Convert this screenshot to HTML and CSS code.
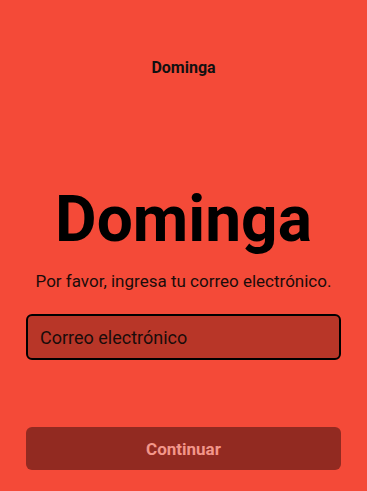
FILE: index.html
```html
<!DOCTYPE html>
<html>
  <head>
    <link rel="stylesheet" href="styles.css">
    <title>Dominga</title>
  </head>
  <body>
    <p class="top-title">Dominga</p>
    <div class="login-box">
      <h1 class="brand">Dominga</h1>
      <p class="subtitle">Por favor, ingresa tu correo electrónico.</p>
      <input class="email-input" type="email" placeholder="Correo electrónico">
      <button class="continue-button">Continuar</button>
      <p class="terms-text">Política de privacidad</p>
    </div>
  </body>
</html>
```
FILE: styles.css
```css
body {
  margin: 0;
  font-family: Roboto, "Liberation Sans", Arial, sans-serif;
  background-color: #f44a38;
  color: #111;
  overflow: hidden;
}

.top-title {
  text-align: center;
  font-size: 16px;
  font-weight: bold;
  margin: 0;
  padding-top: 59px;
  line-height: 18px;
}

.login-box {
  width: 315px;
  margin: 0 auto;
  display: flex;
  flex-direction: column;
  align-items: center;
}

.brand {
  font-size: 64px;
  font-weight: bold;
  color: #000;
  margin: 105px 0 0 0;
  line-height: 76px;
}

.subtitle {
  font-size: 17px;
  margin: 13px 0 0 0;
  line-height: 20px;
  color: #1a0c0a;
}

.email-input {
  box-sizing: border-box;
  width: 100%;
  height: 46px;
  margin-top: 23px;
  border: 2px solid #000;
  border-radius: 6px;
  background-color: #b83628;
  font-family: inherit;
  font-size: 18px;
  padding: 0 12px;
  color: #111;
  outline: none;
}

.email-input::placeholder {
  color: #1a0c0a;
  opacity: 1;
}

.continue-button {
  width: 100%;
  height: 43px;
  margin-top: 67px;
  border: none;
  border-radius: 6px;
  background-color: #922a21;
  color: #f3968a;
  font-family: inherit;
  font-size: 17px;
  font-weight: bold;
}

.terms-text {
  font-size: 15px;
  color: #fff;
  margin: 22px 0 0 0;
}
```
